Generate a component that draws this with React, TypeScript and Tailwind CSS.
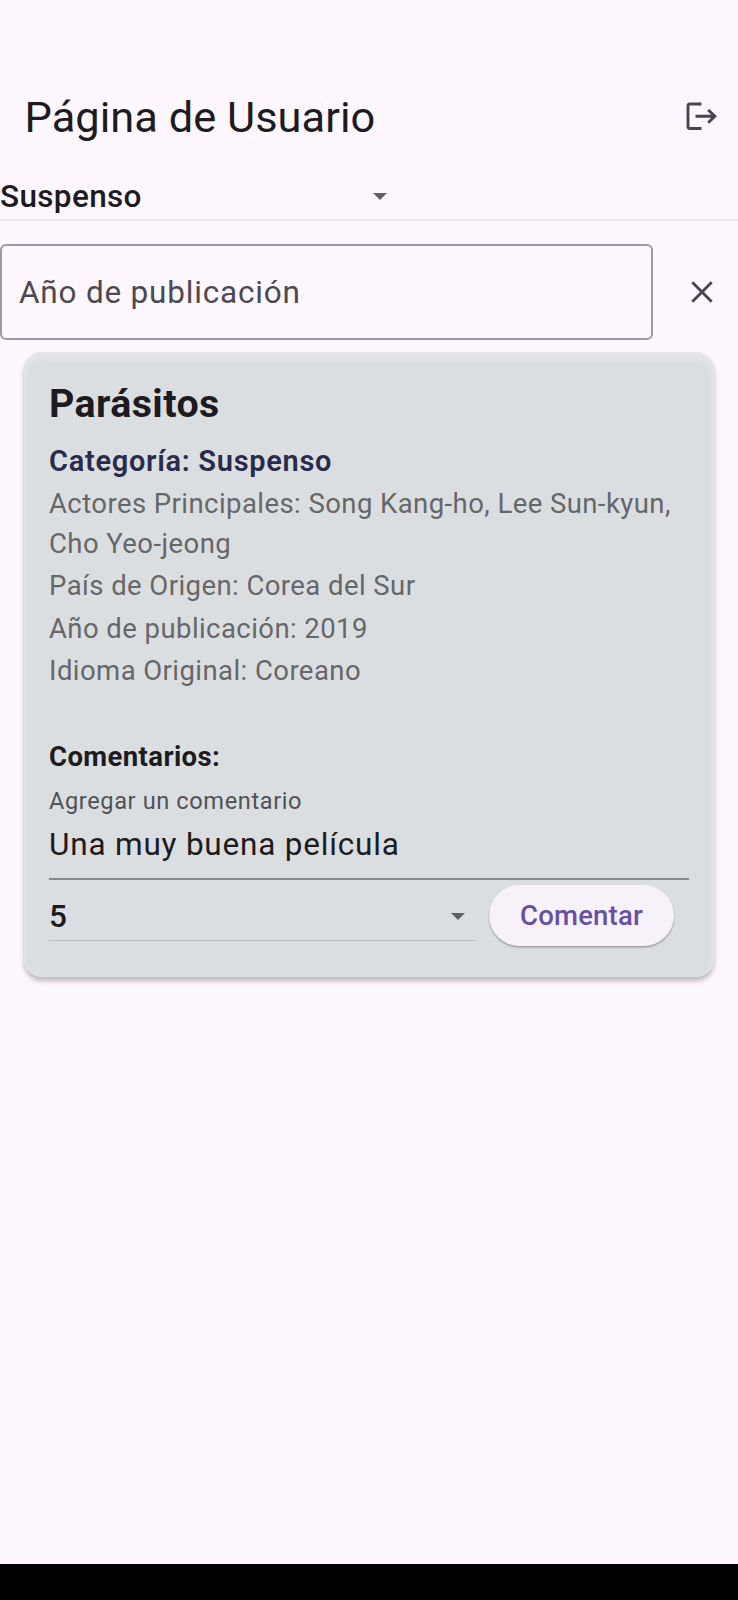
import { ReactNode } from "react";

function Caret() {
  return (
    <svg className="h-[7px] w-[14px] shrink-0" viewBox="0 0 14 7" fill="#616163">
      <path d="M0 0h14L7 7z" />
    </svg>
  );
}

function LogoutIcon() {
  return (
    <svg className="h-[30px] w-[32px]" viewBox="0 0 32 30" fill="none" stroke="#49454f" strokeWidth="2.9">
      <path d="M15.5 2H4Q2 2 2 4V24.5Q2 26.5 4 26.5H15.5" />
      <path d="M9.5 14.3H29M22.2 7.9L28.8 14.3L22.2 20.7" />
    </svg>
  );
}

function CloseIcon() {
  return (
    <svg className="h-[22px] w-[22px]" viewBox="0 0 22 22" fill="none" stroke="#49454f" strokeWidth="2.9">
      <path d="M1.3 1.3L20.7 20.7M20.7 1.3L1.3 20.7" />
    </svg>
  );
}

function Detail({ children }: { children: ReactNode }) {
  return (
    <p className="mb-[2.3px] text-[27.5px] leading-[40px] tracking-[0.43px] text-[#666769]">{children}</p>
  );
}

export default function App() {
  return (
    <div className="flex h-[1600px] w-[738px] flex-col bg-[#fef7ff] font-['Roboto',sans-serif] text-[#1d1b20]">
      <header className="mt-[74px] flex h-[86px] shrink-0 items-center justify-between pr-[20px] pl-[24.5px]">
        <h1 className="pt-[2px] text-[43.4px] leading-[52px] tracking-[0.03px]">Página de Usuario</h1>
        <LogoutIcon />
      </header>

      <div className="flex h-[61px] shrink-0 items-center border-b-2 border-[#ebe4ec] pt-[13px]">
        <div className="flex w-[387px] items-center justify-between">
          <span className="pt-px text-[31.5px] leading-[44px] font-medium tracking-[0.35px]">Suspenso</span>
          <Caret />
        </div>
      </div>

      <div className="mt-[23px] flex h-[96px] shrink-0 items-center">
        <div className="flex h-full w-[653px] items-center rounded-[6px] border-2 border-[#9f98a2] pt-[2px] pl-[17px]">
          <span className="text-[31.5px] leading-[44px] tracking-[0.8px] text-[#4c4950]">Año de publicación</span>
        </div>
        <div className="ml-[37.5px]">
          <CloseIcon />
        </div>
      </div>

      <main className="mx-[24px] mt-[12px] h-[625px] shrink-0 rounded-[18px] bg-[#dbdee1] px-[25px] pt-[29px] shadow-[0_4px_5px_rgba(0,0,0,0.25),inset_0_8px_6px_-2px_#e6e7ec,inset_4px_0_3px_-1px_#e0e2e6,inset_-4px_0_3px_-1px_#e0e2e6]">
        <h2 className="text-[39.4px] leading-[46px] font-bold tracking-[0.4px]">Parásitos</h2>
        <p className="mt-[14px] mb-[3px] text-[29px] leading-[40px] font-semibold tracking-[0.7px] text-[#292b4d]">
          Categoría: Suspenso
        </p>
        <Detail>Actores Principales: Song Kang-ho, Lee Sun-kyun, Cho Yeo-jeong</Detail>
        <Detail>País de Origen: Corea del Sur</Detail>
        <Detail>Año de publicación: 2019</Detail>
        <Detail>Idioma Original: Coreano</Detail>

        <h3 className="mt-[46px] text-[27.5px] leading-[40px] font-bold tracking-[0.4px]">Comentarios:</h3>
        <div className="mt-[8px] border-b-2 border-[#85888b] pb-[11px]">
          <div className="text-[23.6px] leading-[32px] tracking-[0.6px] text-[#515257]">Agregar un comentario</div>
          <div className="mt-[6px] text-[31.5px] leading-[44px] tracking-[0.8px]">Una muy buena película</div>
        </div>

        <div className="mt-[5.5px] flex h-[61px] items-start">
          <div className="flex h-[56px] w-[427px] items-center justify-between border-b border-[#bcbfc2] pt-[8px] pr-[11px]">
            <span className="text-[31.5px] leading-[44px] font-medium">5</span>
            <Caret />
          </div>
          <button className="ml-[13px] flex h-[61px] w-[185px] items-center justify-center rounded-full bg-[#f7f2fa] text-[27.5px] leading-[40px] font-medium tracking-[0.2px] text-[#6750a4] shadow-[0_1.5px_2px_rgba(0,0,0,0.3)]">
            Comentar
          </button>
        </div>
      </main>

      <div className="mt-auto h-[36px] w-full shrink-0 bg-black" />
    </div>
  );
}
